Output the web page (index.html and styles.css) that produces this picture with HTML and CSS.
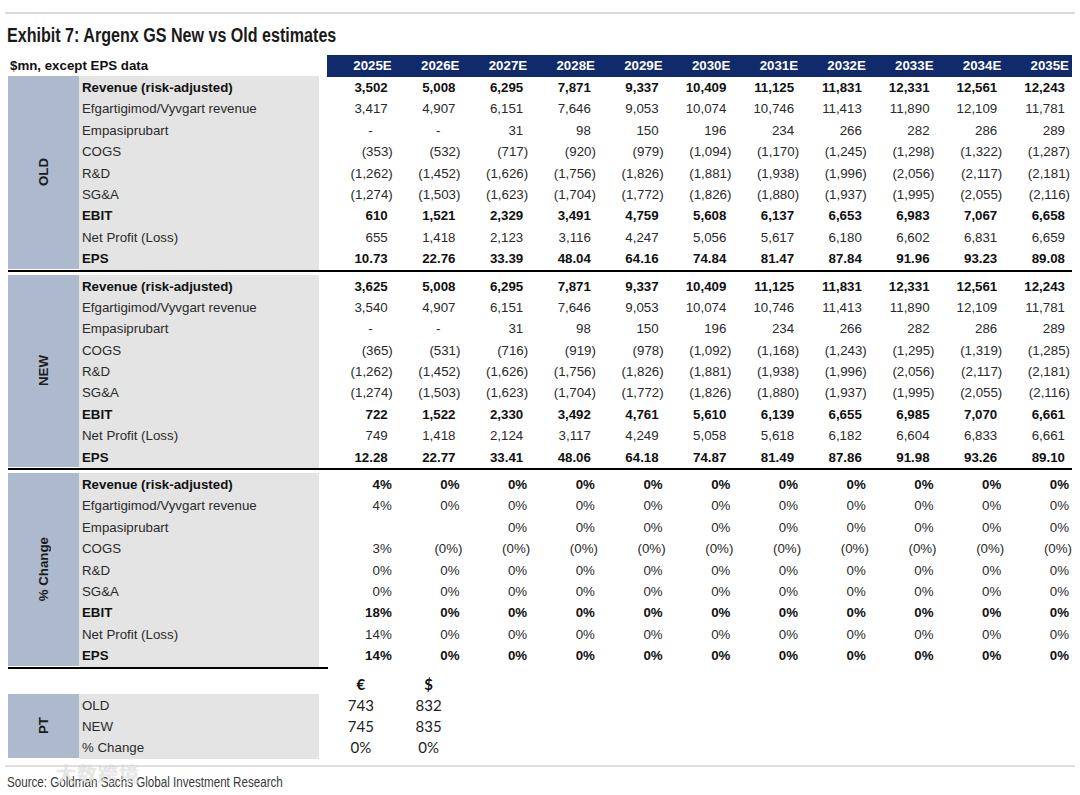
FILE: index.html
```html
<!DOCTYPE html>
<html>
<head>
<meta charset="utf-8">
<link rel="stylesheet" href="styles.css">
</head>
<body>
<div class="page">
  <div class="rule"></div>
  <h1 class="title">Exhibit 7: Argenx GS New vs Old estimates</h1>
  <div class="tbl">
    <div class="head">
      <div class="cap">$mn, except EPS data</div>
      <div class="hc">2025E</div><div class="hc">2026E</div><div class="hc">2027E</div><div class="hc">2028E</div><div class="hc">2029E</div><div class="hc">2030E</div><div class="hc">2031E</div><div class="hc">2032E</div><div class="hc">2033E</div><div class="hc">2034E</div><div class="hc">2035E</div>
    </div>

    <div class="sec">
      <div class="side"><span>OLD</span></div>
      <div class="rows">
        <div class="row b"><div class="lbl">Revenue (risk-adjusted)</div><div class="c">3,502</div><div class="c">5,008</div><div class="c">6,295</div><div class="c">7,871</div><div class="c">9,337</div><div class="c">10,409</div><div class="c">11,125</div><div class="c">11,831</div><div class="c">12,331</div><div class="c">12,561</div><div class="c">12,243</div></div>
        <div class="row"><div class="lbl">Efgartigimod/Vyvgart revenue</div><div class="c">3,417</div><div class="c">4,907</div><div class="c">6,151</div><div class="c">7,646</div><div class="c">9,053</div><div class="c">10,074</div><div class="c">10,746</div><div class="c">11,413</div><div class="c">11,890</div><div class="c">12,109</div><div class="c">11,781</div></div>
        <div class="row"><div class="lbl">Empasiprubart</div><div class="c d">-</div><div class="c d">-</div><div class="c">31</div><div class="c">98</div><div class="c">150</div><div class="c">196</div><div class="c">234</div><div class="c">266</div><div class="c">282</div><div class="c">286</div><div class="c">289</div></div>
        <div class="row"><div class="lbl">COGS</div><div class="c ng">(353)</div><div class="c ng">(532)</div><div class="c ng">(717)</div><div class="c ng">(920)</div><div class="c ng">(979)</div><div class="c ng">(1,094)</div><div class="c ng">(1,170)</div><div class="c ng">(1,245)</div><div class="c ng">(1,298)</div><div class="c ng">(1,322)</div><div class="c ng">(1,287)</div></div>
        <div class="row"><div class="lbl">R&amp;D</div><div class="c ng">(1,262)</div><div class="c ng">(1,452)</div><div class="c ng">(1,626)</div><div class="c ng">(1,756)</div><div class="c ng">(1,826)</div><div class="c ng">(1,881)</div><div class="c ng">(1,938)</div><div class="c ng">(1,996)</div><div class="c ng">(2,056)</div><div class="c ng">(2,117)</div><div class="c ng">(2,181)</div></div>
        <div class="row"><div class="lbl">SG&amp;A</div><div class="c ng">(1,274)</div><div class="c ng">(1,503)</div><div class="c ng">(1,623)</div><div class="c ng">(1,704)</div><div class="c ng">(1,772)</div><div class="c ng">(1,826)</div><div class="c ng">(1,880)</div><div class="c ng">(1,937)</div><div class="c ng">(1,995)</div><div class="c ng">(2,055)</div><div class="c ng">(2,116)</div></div>
        <div class="row b"><div class="lbl">EBIT</div><div class="c">610</div><div class="c">1,521</div><div class="c">2,329</div><div class="c">3,491</div><div class="c">4,759</div><div class="c">5,608</div><div class="c">6,137</div><div class="c">6,653</div><div class="c">6,983</div><div class="c">7,067</div><div class="c">6,658</div></div>
        <div class="row"><div class="lbl">Net Profit (Loss)</div><div class="c">655</div><div class="c">1,418</div><div class="c">2,123</div><div class="c">3,116</div><div class="c">4,247</div><div class="c">5,056</div><div class="c">5,617</div><div class="c">6,180</div><div class="c">6,602</div><div class="c">6,831</div><div class="c">6,659</div></div>
        <div class="row b"><div class="lbl">EPS</div><div class="c">10.73</div><div class="c">22.76</div><div class="c">33.39</div><div class="c">48.04</div><div class="c">64.16</div><div class="c">74.84</div><div class="c">81.47</div><div class="c">87.84</div><div class="c">91.96</div><div class="c">93.23</div><div class="c">89.08</div></div>
      </div>
    </div>
    <div class="sep"></div>

    <div class="sec">
      <div class="side"><span>NEW</span></div>
      <div class="rows">
        <div class="row b"><div class="lbl">Revenue (risk-adjusted)</div><div class="c">3,625</div><div class="c">5,008</div><div class="c">6,295</div><div class="c">7,871</div><div class="c">9,337</div><div class="c">10,409</div><div class="c">11,125</div><div class="c">11,831</div><div class="c">12,331</div><div class="c">12,561</div><div class="c">12,243</div></div>
        <div class="row"><div class="lbl">Efgartigimod/Vyvgart revenue</div><div class="c">3,540</div><div class="c">4,907</div><div class="c">6,151</div><div class="c">7,646</div><div class="c">9,053</div><div class="c">10,074</div><div class="c">10,746</div><div class="c">11,413</div><div class="c">11,890</div><div class="c">12,109</div><div class="c">11,781</div></div>
        <div class="row"><div class="lbl">Empasiprubart</div><div class="c d">-</div><div class="c d">-</div><div class="c">31</div><div class="c">98</div><div class="c">150</div><div class="c">196</div><div class="c">234</div><div class="c">266</div><div class="c">282</div><div class="c">286</div><div class="c">289</div></div>
        <div class="row"><div class="lbl">COGS</div><div class="c ng">(365)</div><div class="c ng">(531)</div><div class="c ng">(716)</div><div class="c ng">(919)</div><div class="c ng">(978)</div><div class="c ng">(1,092)</div><div class="c ng">(1,168)</div><div class="c ng">(1,243)</div><div class="c ng">(1,295)</div><div class="c ng">(1,319)</div><div class="c ng">(1,285)</div></div>
        <div class="row"><div class="lbl">R&amp;D</div><div class="c ng">(1,262)</div><div class="c ng">(1,452)</div><div class="c ng">(1,626)</div><div class="c ng">(1,756)</div><div class="c ng">(1,826)</div><div class="c ng">(1,881)</div><div class="c ng">(1,938)</div><div class="c ng">(1,996)</div><div class="c ng">(2,056)</div><div class="c ng">(2,117)</div><div class="c ng">(2,181)</div></div>
        <div class="row"><div class="lbl">SG&amp;A</div><div class="c ng">(1,274)</div><div class="c ng">(1,503)</div><div class="c ng">(1,623)</div><div class="c ng">(1,704)</div><div class="c ng">(1,772)</div><div class="c ng">(1,826)</div><div class="c ng">(1,880)</div><div class="c ng">(1,937)</div><div class="c ng">(1,995)</div><div class="c ng">(2,055)</div><div class="c ng">(2,116)</div></div>
        <div class="row b"><div class="lbl">EBIT</div><div class="c">722</div><div class="c">1,522</div><div class="c">2,330</div><div class="c">3,492</div><div class="c">4,761</div><div class="c">5,610</div><div class="c">6,139</div><div class="c">6,655</div><div class="c">6,985</div><div class="c">7,070</div><div class="c">6,661</div></div>
        <div class="row"><div class="lbl">Net Profit (Loss)</div><div class="c">749</div><div class="c">1,418</div><div class="c">2,124</div><div class="c">3,117</div><div class="c">4,249</div><div class="c">5,058</div><div class="c">5,618</div><div class="c">6,182</div><div class="c">6,604</div><div class="c">6,833</div><div class="c">6,661</div></div>
        <div class="row b"><div class="lbl">EPS</div><div class="c">12.28</div><div class="c">22.77</div><div class="c">33.41</div><div class="c">48.06</div><div class="c">64.18</div><div class="c">74.87</div><div class="c">81.49</div><div class="c">87.86</div><div class="c">91.98</div><div class="c">93.26</div><div class="c">89.10</div></div>
      </div>
    </div>
    <div class="sep"></div>

    <div class="sec">
      <div class="side"><span>% Change</span></div>
      <div class="rows">
        <div class="row b"><div class="lbl">Revenue (risk-adjusted)</div><div class="c p">4%</div><div class="c p">0%</div><div class="c p">0%</div><div class="c p">0%</div><div class="c p">0%</div><div class="c p">0%</div><div class="c p">0%</div><div class="c p">0%</div><div class="c p">0%</div><div class="c p">0%</div><div class="c p">0%</div></div>
        <div class="row"><div class="lbl">Efgartigimod/Vyvgart revenue</div><div class="c p">4%</div><div class="c p">0%</div><div class="c p">0%</div><div class="c p">0%</div><div class="c p">0%</div><div class="c p">0%</div><div class="c p">0%</div><div class="c p">0%</div><div class="c p">0%</div><div class="c p">0%</div><div class="c p">0%</div></div>
        <div class="row"><div class="lbl">Empasiprubart</div><div class="c p"></div><div class="c p"></div><div class="c p">0%</div><div class="c p">0%</div><div class="c p">0%</div><div class="c p">0%</div><div class="c p">0%</div><div class="c p">0%</div><div class="c p">0%</div><div class="c p">0%</div><div class="c p">0%</div></div>
        <div class="row"><div class="lbl">COGS</div><div class="c p">3%</div><div class="c pn">(0%)</div><div class="c pn">(0%)</div><div class="c pn">(0%)</div><div class="c pn">(0%)</div><div class="c pn">(0%)</div><div class="c pn">(0%)</div><div class="c pn">(0%)</div><div class="c pn">(0%)</div><div class="c pn">(0%)</div><div class="c pn">(0%)</div></div>
        <div class="row"><div class="lbl">R&amp;D</div><div class="c p">0%</div><div class="c p">0%</div><div class="c p">0%</div><div class="c p">0%</div><div class="c p">0%</div><div class="c p">0%</div><div class="c p">0%</div><div class="c p">0%</div><div class="c p">0%</div><div class="c p">0%</div><div class="c p">0%</div></div>
        <div class="row"><div class="lbl">SG&amp;A</div><div class="c p">0%</div><div class="c p">0%</div><div class="c p">0%</div><div class="c p">0%</div><div class="c p">0%</div><div class="c p">0%</div><div class="c p">0%</div><div class="c p">0%</div><div class="c p">0%</div><div class="c p">0%</div><div class="c p">0%</div></div>
        <div class="row b"><div class="lbl">EBIT</div><div class="c p">18%</div><div class="c p">0%</div><div class="c p">0%</div><div class="c p">0%</div><div class="c p">0%</div><div class="c p">0%</div><div class="c p">0%</div><div class="c p">0%</div><div class="c p">0%</div><div class="c p">0%</div><div class="c p">0%</div></div>
        <div class="row"><div class="lbl">Net Profit (Loss)</div><div class="c p">14%</div><div class="c p">0%</div><div class="c p">0%</div><div class="c p">0%</div><div class="c p">0%</div><div class="c p">0%</div><div class="c p">0%</div><div class="c p">0%</div><div class="c p">0%</div><div class="c p">0%</div><div class="c p">0%</div></div>
        <div class="row b"><div class="lbl">EPS</div><div class="c p">14%</div><div class="c p">0%</div><div class="c p">0%</div><div class="c p">0%</div><div class="c p">0%</div><div class="c p">0%</div><div class="c p">0%</div><div class="c p">0%</div><div class="c p">0%</div><div class="c p">0%</div><div class="c p">0%</div></div>
      </div>
    </div>
    <div class="sep short"></div>

    <div class="cur">
      <div class="cur-sp"></div>
      <div class="cc">€</div><div class="cc">$</div>
    </div>

    <div class="sec">
      <div class="side"><span>PT</span></div>
      <div class="rows">
        <div class="row pt"><div class="lbl">OLD</div><div class="pv">743</div><div class="pv">832</div></div>
        <div class="row pt"><div class="lbl">NEW</div><div class="pv">745</div><div class="pv">835</div></div>
        <div class="row pt"><div class="lbl">% Change</div><div class="pv">0%</div><div class="pv">0%</div></div>
      </div>
    </div>
  </div>
  <div class="rule bottom"></div>
  <p class="source">Source: Goldman Sachs Global Investment Research</p>
  <span class="wm">大数跨境</span>
</div>
</body>
</html>
```
FILE: styles.css
```css
* { box-sizing: border-box; }
html, body { margin: 0; padding: 0; background: #fff; }
body {
  font-family: "Liberation Sans", Arial, sans-serif;
  font-size: 13.3px;
  color: #222;
}
.page {
  position: relative;
  width: 1080px;
  padding: 12px 5px 0 5px;
}
.rule {
  height: 2px;
  background: #d9d9d9;
}
.title {
  margin: 9px 0 0 2px;
  height: 32px;
  line-height: 24px;
  font-family: "Liberation Sans", Arial, sans-serif;
  font-size: 19.5px;
  font-weight: bold;
  color: #1a1a1a;
  white-space: nowrap;
  transform: scaleX(0.825);
  transform-origin: left center;
}
.tbl {
  margin-left: 3px;
  width: 1064px;
}
.head {
  display: grid;
  grid-template-columns: 319px repeat(11, 1fr);
  height: 21px;
  line-height: 21px;
}
.cap {
  padding-left: 2px;
  font-weight: bold;
  color: #111;
  line-height: 22px;
}
.hc {
  background: #102a6b;
  color: #fff;
  font-weight: bold;
  text-align: right;
  padding-right: 3px;
}
.sec {
  display: flex;
}
.side {
  width: 71px;
  flex: none;
  background: #adb9cc;
  display: flex;
  align-items: center;
  justify-content: center;
}
.side span {
  writing-mode: vertical-rl;
  transform: rotate(180deg);
  font-weight: bold;
  color: #1a1a1a;
  white-space: nowrap;
}
.rows {
  flex: 1;
}
.row {
  display: grid;
  grid-template-columns: 248px repeat(11, 1fr);
  height: 21.4px;
  line-height: 21.4px;
  color: #2a2a2a;
}
.row > * {
  padding-top: 1px;
}
.row.b {
  font-weight: bold;
  color: #111;
}
.lbl {
  margin-right: 8px;
  background: #e4e4e4;
  padding-left: 3px;
  white-space: nowrap;
}
.c {
  text-align: right;
  padding-right: 7px;
  white-space: nowrap;
}
.c.ng { padding-right: 2px; }
.c.d { padding-right: 22px; }
.c.p { padding-right: 3px; }
.c.pn { padding-right: 0; }
.sep {
  height: 2px;
  background: #000;
  margin: 1px 0 3px 0;
}
.sep.short {
  width: 320px;
}
.cur {
  display: grid;
  grid-template-columns: 319px repeat(11, 1fr);
  height: 22px;
  align-items: end;
  font-family: Lato, "Open Sans", sans-serif;
  font-weight: bold;
  font-size: 15px;
  color: #111;
}
.cc {
  text-align: center;
  line-height: 20px;
}
.row.pt .pv {
  text-align: center;
  font-family: Lato, "Open Sans", sans-serif;
  font-size: 15px;
  color: #222;
}
.rule.bottom {
  margin-top: 7px;
  background: #e0e0e0;
}
.source {
  margin: 6px 0 0 2px;
  font-family: "Liberation Sans", Arial, sans-serif;
  font-size: 14px;
  line-height: 18px;
  color: #3a3a3a;
  white-space: nowrap;
  transform: scaleX(0.83);
  transform-origin: left center;
}
.wm {
  position: absolute;
  left: 56px;
  top: 762px;
  font-family: "Noto Sans CJK SC", sans-serif;
  font-size: 20px;
  line-height: 24px;
  color: rgba(255, 255, 255, 0.75);
  text-shadow: 0 0 1px rgba(0, 0, 0, 0.35);
  letter-spacing: 1px;
}
```
